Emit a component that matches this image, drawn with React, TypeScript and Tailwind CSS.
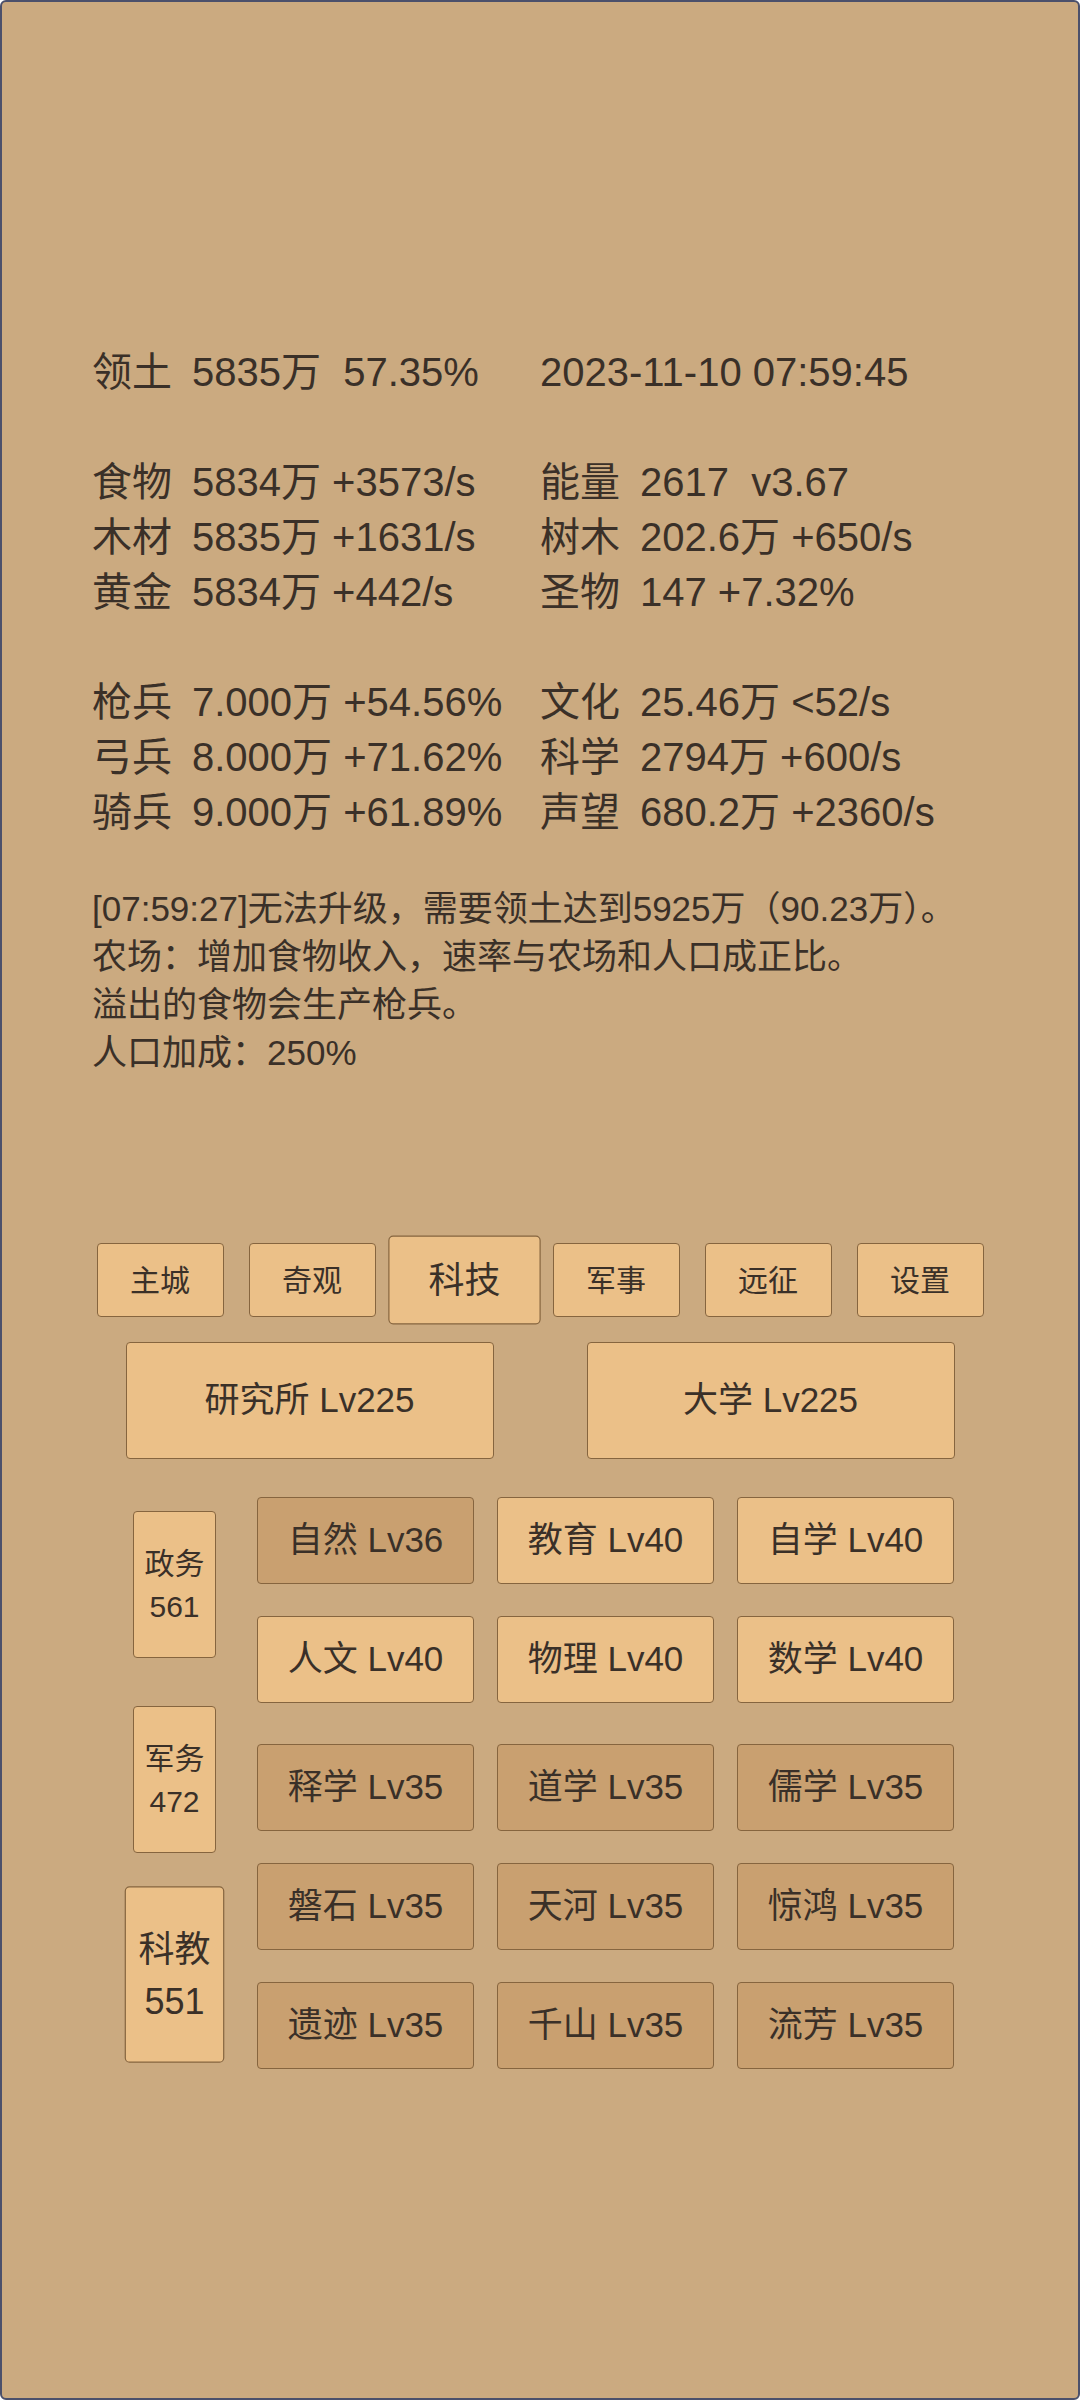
import React from "react";

const FONT = "font-['Liberation_Sans','Noto_Sans_CJK_SC',sans-serif]";

interface StatRow {
  left?: [string, string];
  leftRaw?: string;
  right?: [string, string];
  rightRaw?: string;
}

const stats: (StatRow | null)[] = [
  { left: ["领土", "5835万  57.35%"], rightRaw: "2023-11-10 07:59:45" },
  null,
  { left: ["食物", "5834万 +3573/s"], right: ["能量", "2617  v3.67"] },
  { left: ["木材", "5835万 +1631/s"], right: ["树木", "202.6万 +650/s"] },
  { left: ["黄金", "5834万 +442/s"], right: ["圣物", "147 +7.32%"] },
  null,
  { left: ["枪兵", "7.000万 +54.56%"], right: ["文化", "25.46万 <52/s"] },
  { left: ["弓兵", "8.000万 +71.62%"], right: ["科学", "2794万 +600/s"] },
  { left: ["骑兵", "9.000万 +61.89%"], right: ["声望", "680.2万 +2360/s"] },
];

const messages = [
  "[07:59:27]无法升级，需要领土达到5925万（90.23万）。",
  "农场：增加食物收入，速率与农场和人口成正比。",
  "溢出的食物会生产枪兵。",
  "人口加成：250%",
];

const tabs = ["主城", "奇观", "科技", "军事", "远征", "设置"];

const sideTabs = [
  { name: "政务", value: "561" },
  { name: "军务", value: "472" },
  { name: "科教", value: "551", active: true },
];

const groupA = [
  [
    { name: "自然 Lv36", dark: true },
    { name: "教育 Lv40" },
    { name: "自学 Lv40" },
  ],
  [{ name: "人文 Lv40" }, { name: "物理 Lv40" }, { name: "数学 Lv40" }],
];

const groupB = [
  ["释学 Lv35", "道学 Lv35", "儒学 Lv35"],
  ["磐石 Lv35", "天河 Lv35", "惊鸿 Lv35"],
  ["遗迹 Lv35", "千山 Lv35", "流芳 Lv35"],
];

function Cell({ pair, raw }: { pair?: [string, string]; raw?: string }) {
  if (raw) return <div className="whitespace-pre">{raw}</div>;
  if (!pair) return <div />;
  return (
    <div className="flex whitespace-pre">
      <span className="w-[100px] shrink-0">{pair[0]}</span>
      <span>{pair[1]}</span>
    </div>
  );
}

function TechButton({ label, dark }: { label: string; dark?: boolean }) {
  return (
    <div
      className={`flex h-[87px] w-[217px] items-center justify-center rounded-[4px] border border-[#86653f] text-[35px] ${
        dark ? "bg-[#c9a070]" : "bg-[#ebc088]"
      }`}
    >
      {label}
    </div>
  );
}

export default function App() {
  return (
    <div
      className={`${FONT} flex h-[2400px] w-[1080px] flex-col overflow-hidden rounded-[6px] border-2 border-[#4b506b] bg-[#cbaa80] text-[#3a3028]`}
    >
      {/* stats */}
      <div className="mt-[343px] flex flex-col pl-[90px] text-[40px] leading-[55px]">
        {stats.map((row, i) =>
          row ? (
            <div key={i} className="grid grid-cols-[448px_1fr]">
              <Cell pair={row.left} raw={row.leftRaw} />
              <Cell pair={row.right} raw={row.rightRaw} />
            </div>
          ) : (
            <div key={i} className="h-[55px]" />
          )
        )}
      </div>

      {/* log */}
      <div className="mt-[45px] flex flex-col pl-[90px] text-[35px] leading-[48px]">
        {messages.map((m) => (
          <div key={m}>{m}</div>
        ))}
      </div>

      {/* main tabs */}
      <div className="mt-[166px] flex justify-center gap-[25px]">
        {tabs.map((t) => (
          <div
            key={t}
            className={`flex h-[74px] w-[127px] items-center justify-center rounded-[4px] border border-[#86653f] bg-[#ebc088] text-[30px] ${
              t === "科技" ? "relative z-10 scale-120" : ""
            }`}
          >
            {t}
          </div>
        ))}
      </div>

      {/* buildings */}
      <div className="mt-[25px] flex justify-center gap-[93px]">
        {["研究所 Lv225", "大学 Lv225"].map((b) => (
          <div
            key={b}
            className="flex h-[117px] w-[368px] items-center justify-center rounded-[4px] border border-[#86653f] bg-[#ebc088] text-[35px]"
          >
            {b}
          </div>
        ))}
      </div>

      {/* tech tree */}
      <div className="mt-[38px] flex items-center gap-[41px] pl-[131px]">
        <div className="mb-[7px] flex flex-col gap-[48px]">
          {sideTabs.map((s) => (
            <div
              key={s.name}
              className={`flex h-[147px] w-[83px] flex-col items-center justify-center rounded-[4px] border border-[#86653f] bg-[#ebc088] text-[30px] leading-[43px] ${
                s.active ? "relative z-10 scale-120" : ""
              }`}
            >
              <span>{s.name}</span>
              <span>{s.value}</span>
            </div>
          ))}
        </div>
        <div className="flex flex-col gap-[41px]">
          <div className="flex flex-col gap-[32px]">
            {groupA.map((row, i) => (
              <div key={i} className="flex gap-[23px]">
                {row.map((c) => (
                  <TechButton key={c.name} label={c.name} dark={"dark" in c && c.dark} />
                ))}
              </div>
            ))}
          </div>
          <div className="flex flex-col gap-[32px]">
            {groupB.map((row, i) => (
              <div key={i} className="flex gap-[23px]">
                {row.map((c) => (
                  <TechButton key={c} label={c} dark />
                ))}
              </div>
            ))}
          </div>
        </div>
      </div>
    </div>
  );
}
